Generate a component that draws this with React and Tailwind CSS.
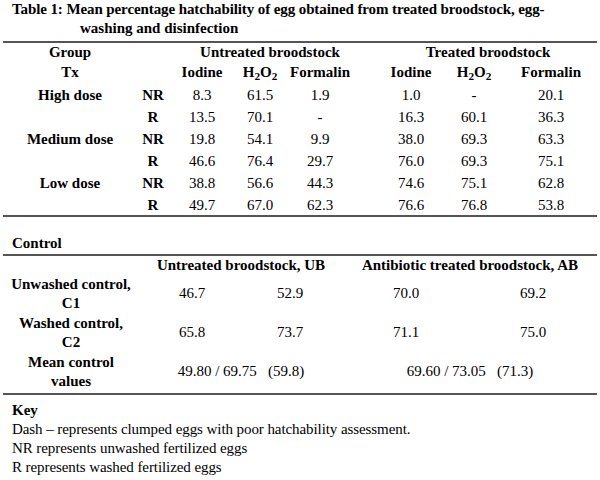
import React from "react";

const H2O2 = () => (
  <span>
    H<sub>2</sub>O<sub>2</sub>
  </span>
);

const rows = [
  { group: "High dose", tx: "NR", vals: ["8.3", "61.5", "1.9", "1.0", "-", "20.1"] },
  { group: "", tx: "R", vals: ["13.5", "70.1", "-", "16.3", "60.1", "36.3"] },
  { group: "Medium dose", tx: "NR", vals: ["19.8", "54.1", "9.9", "38.0", "69.3", "63.3"] },
  { group: "", tx: "R", vals: ["46.6", "76.4", "29.7", "76.0", "69.3", "75.1"] },
  { group: "Low dose", tx: "NR", vals: ["38.8", "56.6", "44.3", "74.6", "75.1", "62.8"] },
  { group: "", tx: "R", vals: ["49.7", "67.0", "62.3", "76.6", "76.8", "53.8"] },
];

const controls = [
  { label: ["Unwashed control,", "C1"], vals: ["46.7", "52.9", "70.0", "69.2"] },
  { label: ["Washed control,", "C2"], vals: ["65.8", "73.7", "71.1", "75.0"] },
];

const Rule = ({ className = "" }) => <div className={"mx-[3px] h-[2px] bg-[#555] " + className} />;

const topCols = "grid grid-cols-[132px_34px_64px_52px_68px_26px_62px_64px_90px] text-center";
const ctrlCols = "grid grid-cols-[134px_108px_88px_144px_110px] text-center";

export default function App() {
  return (
    <div className="w-[600px] h-[480px] bg-white text-black font-['Liberation_Serif',serif] text-[15px] overflow-hidden">
      <div className="font-bold leading-[19px]">
        <div className="pl-[12px] tracking-[-0.1px]">
          Table 1: Mean percentage hatchability of egg obtained from treated broodstock, egg-
        </div>
        <div className="pl-[80px]">washing and disinfection</div>
      </div>

      <Rule className="mt-[3px]" />

      <div className="pl-[4px]">
        <div className={topCols + " font-bold h-[18px] leading-[18px]"}>
          <div>Group</div>
          <div />
          <div className="col-span-3 pl-[16px]">Untreated broodstock</div>
          <div />
          <div className="col-span-3">Treated broodstock</div>
        </div>
        <div className={topCols + " font-bold h-[23px] leading-[23px]"}>
          <div>Tx</div>
          <div />
          <div>Iodine</div>
          <div><H2O2 /></div>
          <div>Formalin</div>
          <div />
          <div>Iodine</div>
          <div><H2O2 /></div>
          <div>Formalin</div>
        </div>
        {rows.map((r, i) => (
          <div key={i} className={topCols + " h-[22px] leading-[22px]"}>
            <div className="font-bold">{r.group}</div>
            <div className="font-bold">{r.tx}</div>
            <div>{r.vals[0]}</div>
            <div>{r.vals[1]}</div>
            <div>{r.vals[2]}</div>
            <div />
            <div>{r.vals[3]}</div>
            <div>{r.vals[4]}</div>
            <div>{r.vals[5]}</div>
          </div>
        ))}
      </div>

      <Rule className="-mt-[1px]" />

      <div className="mt-[17px] pl-[12px] font-bold leading-[19px]">Control</div>
      <Rule className="mt-[1px]" />

      <div className="pl-[4px]">
        <div className={ctrlCols + " font-bold h-[18px] leading-[18px]"}>
          <div />
          <div className="col-span-2 pl-[10px]">Untreated broodstock, UB</div>
          <div className="col-span-2 pl-[18px]">Antibiotic treated broodstock, AB</div>
        </div>
        {controls.map((c, i) => (
          <div key={i} className={ctrlCols + " h-[39px] items-center leading-[19px]"}>
            <div className="font-bold">
              <div>{c.label[0]}</div>
              <div>{c.label[1]}</div>
            </div>
            {c.vals.map((v, j) => (
              <div key={j}>{v}</div>
            ))}
          </div>
        ))}
        <div className={ctrlCols + " h-[39px] items-center leading-[19px]"}>
          <div className="font-bold">
            <div>Mean control</div>
            <div>values</div>
          </div>
          <div className="col-span-2 pl-[10px] whitespace-pre">49.80 / 69.75   (59.8)</div>
          <div className="col-span-2 pl-[18px] whitespace-pre">69.60 / 73.05   (71.3)</div>
        </div>
      </div>

      <Rule className="mt-[2px]" />

      <div className="mt-[6px] pl-[12px] leading-[19px]">
        <div className="font-bold">Key</div>
        <div className="tracking-[-0.08px]">Dash – represents clumped eggs with poor hatchability assessment.</div>
        <div className="tracking-[-0.08px]">NR represents unwashed fertilized eggs</div>
        <div className="tracking-[-0.08px]">R represents washed fertilized eggs</div>
      </div>
    </div>
  );
}
